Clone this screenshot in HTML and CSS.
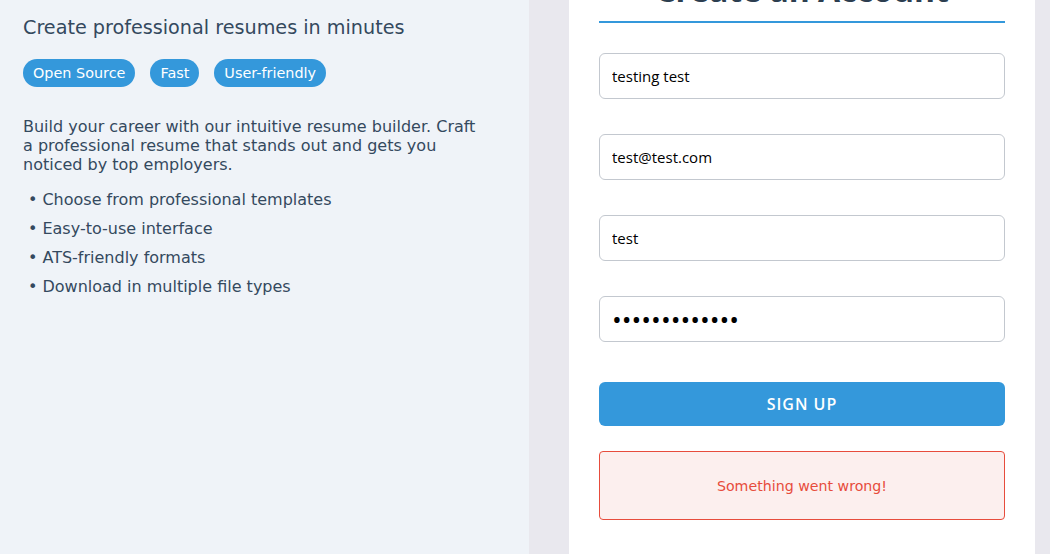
FILE: index.html
```html
<!DOCTYPE html>
<html lang="en">
<head>
  <meta charset="UTF-8">
  <title>Sign up</title>
  <meta name="viewport" content="width=device-width,initial-scale=1">
  <link rel="stylesheet" href="styles.css">
</head>
<body>
  <div class="page">
    <section class="intro">
      <h2 class="tagline">Create professional resumes in minutes</h2>
      <div class="badges">
        <span class="badge">Open Source</span>
        <span class="badge">Fast</span>
        <span class="badge">User-friendly</span>
      </div>
      <p class="lead">Build your career with our intuitive resume builder. Craft a professional resume that stands out and gets you noticed by top employers.</p>
      <ul class="perks">
        <li>Choose from professional templates</li>
        <li>Easy-to-use interface</li>
        <li>ATS-friendly formats</li>
        <li>Download in multiple file types</li>
      </ul>
    </section>
    <section class="card">
      <h1 class="title">Create an Account</h1>
      <form class="signup" autocomplete="off">
        <input class="field" type="text" value="testing test">
        <input class="field" type="email" value="test@test.com">
        <input class="field" type="text" value="test">
        <input class="field" type="password" value="testtest12345">
        <button class="submit" type="submit">SIGN UP</button>
      </form>
      <div class="error">Something went wrong!</div>
    </section>
  </div>
</body>
</html>
```
FILE: styles.css
```css
body { margin: 0; padding: 0; background: #e9e8ee; font-family: "DejaVu Sans", sans-serif; overflow: hidden; }
.page { display: flex; height: 554px; }

.intro { width: 529px; box-sizing: border-box; background: #eff3f8; padding: 15px 23px 0; color: #34495e; }
.tagline { font-size: 19.2px; font-weight: normal; margin: 0 0 18px; line-height: 26px; }
.badges { display: flex; gap: 15px; }
.badge { background: #3498db; color: #fff; font-size: 14.4px; line-height: 18px; padding: 5px 10px; border-radius: 14px; }
.lead { font-size: 16px; line-height: 19px; max-width: 462px; margin: 30px 0 16px; }
.perks { list-style: none; margin: 0; padding: 0 0 0 5px; }
.perks li { font-size: 16px; line-height: 19px; margin-bottom: 10px; }
.perks li::before { content: "\2022"; margin-right: 5px; }

.card { width: 466px; margin-left: 40px; background: #fff; padding: 0 30px; box-sizing: border-box; }
.title { font-family: "Open Sans", sans-serif; font-weight: 700; font-size: 32px; color: #2c3e50; text-align: center; margin: -32px 0 0; line-height: 44px; padding-bottom: 9px; border-bottom: 2px solid #3498db; white-space: nowrap; }
.signup { display: flex; flex-direction: column; gap: 35px; margin-top: 30px; }
.field { height: 46px; box-sizing: border-box; border: 1px solid #c3c8cf; border-radius: 6px; padding: 0 12px; font-family: "Open Sans", sans-serif; font-size: 15px; color: #000; }
.field[type="password"] { font-size: 26px; letter-spacing: 0; }
.submit { margin-top: 5px; height: 44px; border: none; border-radius: 6px; background: #3498db; color: #fff; font-family: "Open Sans", sans-serif; font-weight: 600; font-size: 16px; letter-spacing: 1px; }
.error { margin-top: 25px; height: 69px; box-sizing: border-box; border: 1px solid #e74c3c; border-radius: 4px; background: #fcefee; color: #e74c3c; font-size: 14.2px; display: flex; align-items: center; justify-content: center; }
```
